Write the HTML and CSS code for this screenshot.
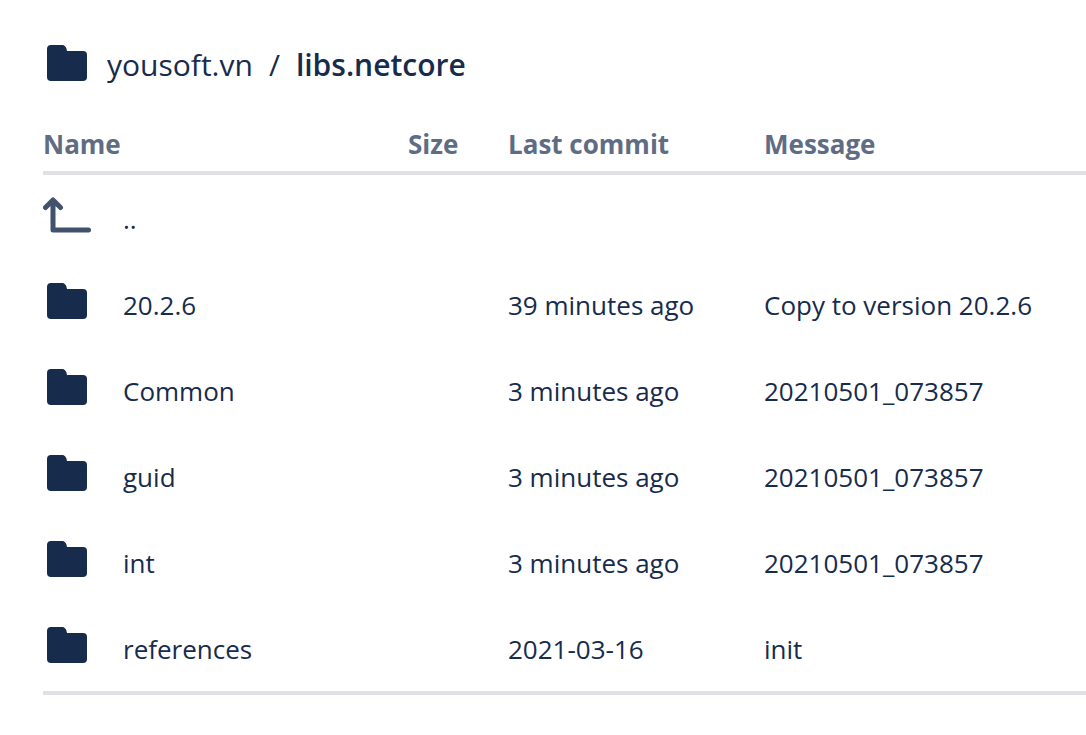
FILE: index.html
```html
<!DOCTYPE html>
<html lang="en">
<head>
  <meta charset="UTF-8" />
  <meta name="viewport" content="width=device-width, initial-scale=1" />
  <title>yousoft.vn / libs.netcore</title>
  <link rel="stylesheet" href="styles.css">
</head>
<body>
  <!-- Shared icons -->
  <svg class="sprite" aria-hidden="true">
    <symbol id="folder" viewBox="0 0 40 36">
      <path d="M4 0h11c3 0 4.500 2.500 5 6H36a4 4 0 0 1 4 4V32a4 4 0 0 1-4 4H4a4 4 0 0 1-4-4V4a4 4 0 0 1 4-4z"/>
    </symbol>
    <symbol id="up" viewBox="0 0 48 36">
      <path d="M2.500 10.500L10 3l7.500 7.500M10 3.500V33h35.500" fill="none" stroke="currentColor" stroke-width="5" stroke-linecap="round" stroke-linejoin="round"/>
    </symbol>
  </svg>

  <main class="browser">
    <nav class="breadcrumb" aria-label="Path">
      <svg class="folder"><use href="#folder"/></svg>
      <a href="#">yousoft.vn</a>
      <span class="slash">/</span>
      <a href="#" class="current">libs.netcore</a>
    </nav>

    <table class="files">
      <thead>
        <tr>
          <th class="name">Name</th>
          <th class="size">Size</th>
          <th class="commit">Last commit</th>
          <th>Message</th>
        </tr>
      </thead>
      <tbody>
        <tr>
          <td><a href="#" class="entry"><svg class="up"><use href="#up"/></svg><span>..</span></a></td>
          <td></td>
          <td></td>
          <td></td>
        </tr>
        <tr>
          <td><a href="#" class="entry"><svg class="folder"><use href="#folder"/></svg><span>20.2.6</span></a></td>
          <td></td>
          <td>39 minutes ago</td>
          <td>Copy to version 20.2.6</td>
        </tr>
        <tr>
          <td><a href="#" class="entry"><svg class="folder"><use href="#folder"/></svg><span>Common</span></a></td>
          <td></td>
          <td>3 minutes ago</td>
          <td>20210501_073857</td>
        </tr>
        <tr>
          <td><a href="#" class="entry"><svg class="folder"><use href="#folder"/></svg><span>guid</span></a></td>
          <td></td>
          <td>3 minutes ago</td>
          <td>20210501_073857</td>
        </tr>
        <tr>
          <td><a href="#" class="entry"><svg class="folder"><use href="#folder"/></svg><span>int</span></a></td>
          <td></td>
          <td>3 minutes ago</td>
          <td>20210501_073857</td>
        </tr>
        <tr>
          <td><a href="#" class="entry"><svg class="folder"><use href="#folder"/></svg><span>references</span></a></td>
          <td></td>
          <td>2021-03-16</td>
          <td>init</td>
        </tr>
      </tbody>
    </table>
  </main>
</body>
</html>
```
FILE: styles.css
```css
body {
  margin: 0;
  background: #fff;
  color: #172b4d;
  font-family: "Open Sans", "Noto Sans", sans-serif;
  font-size: 26px;
  line-height: 36px;
}
a {
  color: inherit;
  text-decoration: none;
}
.sprite {
  position: absolute;
  width: 0;
  height: 0;
}
.browser {
  padding: 42px 0 40px 43px;
}
.breadcrumb {
  display: flex;
  align-items: center;
  padding-left: 4px;
  font-size: 30px;
  line-height: 46px;
}
.folder {
  flex: none;
  width: 40px;
  height: 36px;
  fill: #172b4d;
}
.breadcrumb .folder {
  margin: 0 20px 4px 0;
}
.slash {
  margin: 0 16px;
}
.current {
  font-weight: 600;
}
.files {
  width: 100%;
  margin-top: 34px;
  border-collapse: separate;
  border-spacing: 0;
  table-layout: fixed;
  border-bottom: 4px solid #dfe1e6;
}
.files th {
  padding: 4px 0 9px;
  border-bottom: 4px solid #dfe1e6;
  color: #5e6c84;
  font-weight: 700;
  text-align: left;
  white-space: nowrap;
}
.name {
  width: 365px;
}
.size {
  width: 100px;
}
.commit {
  width: 256px;
}
.files td {
  height: 86px;
  padding: 2px 0 0;
  box-sizing: border-box;
  white-space: nowrap;
}
.entry {
  display: flex;
  align-items: center;
}
.entry .folder {
  margin: 0 36px 8px 4px;
}
.up {
  flex: none;
  width: 48px;
  height: 36px;
  margin: 0 32px 8px 0;
  color: #42526e;
}
```
